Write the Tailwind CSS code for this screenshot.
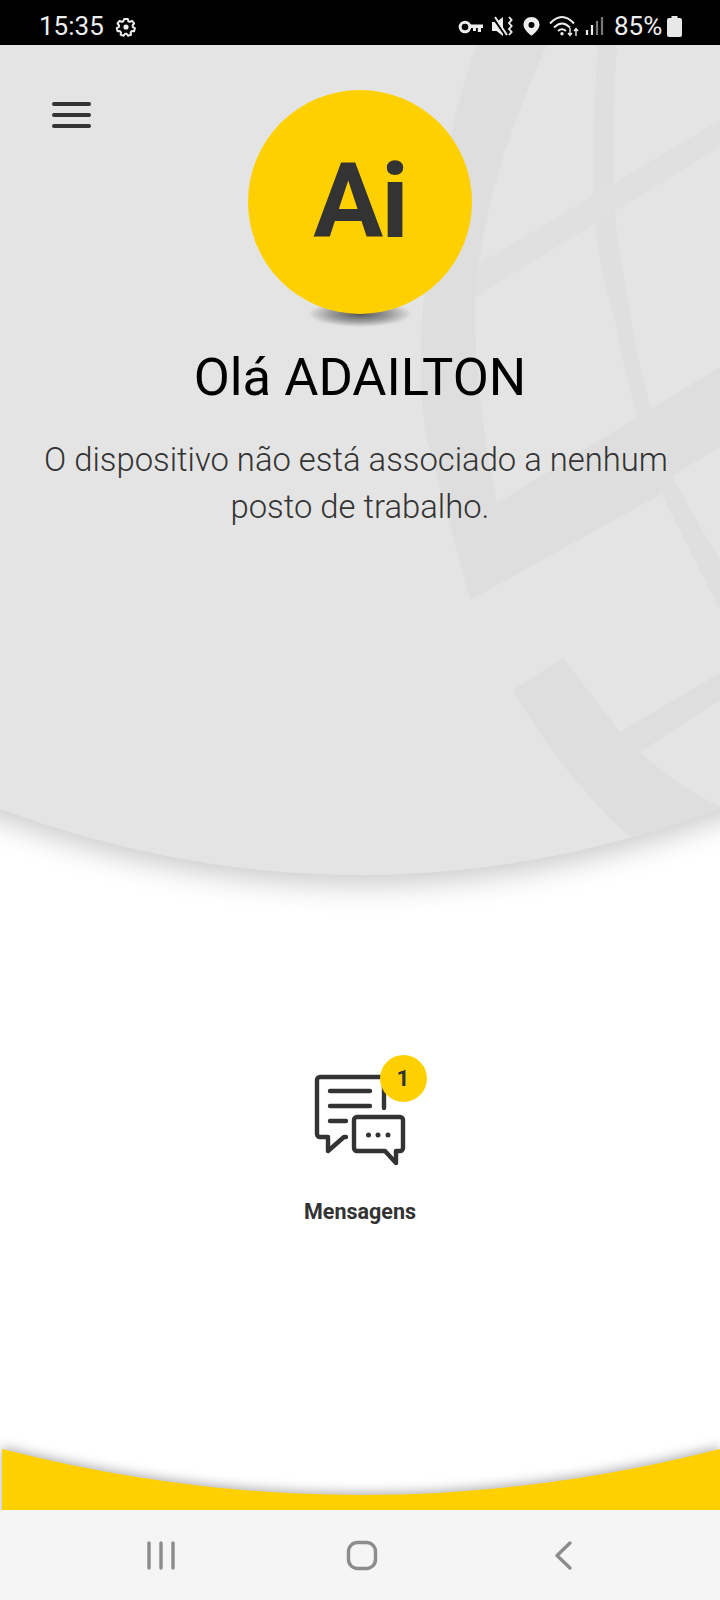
<!DOCTYPE html>
<html lang="pt">
<head>
  <meta charset="UTF-8">
  <meta name="viewport" content="width=device-width, initial-scale=1.0">
  <title>Início</title>
  <script src="https://cdn.jsdelivr.net/npm/@tailwindcss/browser@4"></script>
</head>
<body>
  <div class="w-[720px] h-[1600px] flex flex-col bg-white overflow-hidden font-['Roboto',sans-serif]">

    <!-- status bar -->
    <div class="relative z-20 h-[45px] shrink-0 bg-black flex items-center text-[#eeeeee] text-[26px] leading-none pl-[39px] pr-[38px]">
      <span class="w-[65px] pt-[6px]">15:35</span>
      <svg class="ml-[11px]" width="22" height="45" viewBox="116 0 22 45" fill="none" stroke="#eeeeee" stroke-width="2.200" stroke-linejoin="round">
        <path d="M125 18h4l.6 2.6 1.7.8 2.4-1.2 2.3 2.9-1.7 2 .3 1.9 2.3 1.2-.9 3.4-2.6-.1-1.3 1.5.5 2.6-3.4 1.1-1.5-2.2h-1.8l-1.5 2.2-3.4-1.1.5-2.6-1.3-1.5-2.6.1-.9-3.4 2.3-1.2.3-1.9-1.7-2 2.3-2.9 2.4 1.2 1.7-.8z" transform="translate(12.7 2.7) scale(.9)"/>
        <circle cx="127" cy="27" r="2.600" fill="#eeeeee" stroke="none"/>
      </svg>
      <svg class="ml-auto mr-[9px]" width="148" height="45" viewBox="458 0 148 45" fill="none" stroke="#eeeeee">
        <!-- key -->
        <circle cx="466" cy="27" r="4.800" stroke-width="3"/>
        <path d="M471 24.500h13v3.500h-2v4h-3.200v-4h-1.800v3h-3v-3h-3z" fill="#eeeeee" stroke="none"/>
        <!-- vibrate / mute -->
        <path d="M493 22h4.500l6.500-5v19l-6.500-5h-4.500z" fill="#eeeeee" stroke="none"/>
        <path d="M493 16l14 20" stroke="#000000" stroke-width="2.400"/>
        <path d="M496 17l12 18" stroke-width="2"/>
        <path d="M510 17l2.600 3-2.600 3 2.600 3-2.600 3 2.600 3-2.600 3" stroke-width="1.900"/>
        <!-- location -->
        <path fill-rule="evenodd" d="M532.500 17c-4.500 0-8 3.400-8 7.700 0 3.800 4.400 8.400 8 11 3.600-2.600 8-7.200 8-11 0-4.300-3.500-7.700-8-7.700zm0 5a3 3 0 1 1 0 6 3 3 0 0 1 0-6z" fill="#eeeeee" stroke="none"/>
        <!-- wifi -->
        <path d="M551 23.500Q563 10.500 575 23.500M555 27.500Q563 19.500 571 27.500M559 31Q563 27.500 567 31" stroke-width="1.900"/>
        <circle cx="563" cy="33.800" r="1.700" fill="#eeeeee" stroke="none"/>
        <path d="M571 28v7M569 33l2 2.500 2-2.500M577 36v-7M575 31l2-2.500 2 2.500" stroke-width="1.400"/>
        <!-- signal -->
        <path d="M588 35v-5M593 35v-10" stroke-width="2.200"/>
        <path d="M598 35v-14M603 35v-18" stroke="#777777" stroke-width="2.200"/>
      </svg>
      <span class="w-[49px] pt-[6px]">85%</span>
      <svg class="ml-[4px] mt-[7px]" width="15" height="21" viewBox="0 0 15 21">
        <path d="M4.500 0h6v2h2.500a2 2 0 0 1 2 2v15a2 2 0 0 1-2 2H2a2 2 0 0 1-2-2V4a2 2 0 0 1 2-2h2.500z" fill="#e8e8e8"/>
      </svg>
    </div>

    <!-- hero -->
    <div class="relative shrink-0 h-[785px] text-center">
      <svg class="absolute left-0 top-0" width="720" height="900" viewBox="0 45 720 900">
        <defs>
          <clipPath id="curve"><path d="M0 45H720V809Q360 941 0 809Z"/></clipPath>
        </defs>
        <path class="drop-shadow-[0_10px_14px_rgba(0,0,0,0.2)]" d="M-60 45H780V785Q360 965 -60 785Z" fill="#e4e4e4"/>
        <g clip-path="url(#curve)">
          <path fill="#dedede" d="M477 45Q445 130 425 290Q415 370 427 440L470 600L668 490L657 485L720 447V367L497 503Q475 400 475 307Q480 190 547 45Z"/>
          <path fill="#dfdfdf" d="M598 45Q592 130 593 190Q595 260 615 320Q625 380 657 485L720 610V560Q690 510 673 477Q660 440 650 405Q635 350 630 310Q615 240 613 180Q613 110 617 45Z"/>
          <path fill="#e0e0e0" d="M480 263L720 120V147L475 297Z"/>
          <path fill="#dedede" d="M513 690L563 658L620 732L720 673V700L640 752Q675 785 720 807V830L633 840Q565 780 513 690Z"/>
        </g>
      </svg>

      <div class="relative grid grid-cols-[1fr_224px_1fr] pt-[45px]">
        <div class="pl-[52px] pt-[12px]">
          <div class="w-[39px] flex flex-col gap-[7px]">
            <span class="h-[4px] rounded-full bg-[#333333]"></span>
            <span class="h-[4px] rounded-full bg-[#333333]"></span>
            <span class="h-[4px] rounded-full bg-[#333333]"></span>
          </div>
        </div>
        <div class="relative">
          <div class="absolute left-[60px] top-[211px] w-[104px] h-[26px] bg-[radial-gradient(closest-side,#555555,#999999_55%,transparent)]"></div>
          <div class="relative h-[224px] rounded-full bg-[#ffd000] flex items-center justify-center font-bold text-[104px] tracking-[-2px] leading-none text-[#333333]">Ai</div>
        </div>
      </div>
      <h1 class="relative mt-[33px] text-[52.500px] leading-[60px] text-black font-normal">Olá ADAILTON</h1>
      <p class="relative mt-[30px] text-[32.800px] leading-[47px] font-light text-[#333333]">O dispositivo não está associado a nenhum&nbsp;<br>posto de trabalho.</p>
    </div>

    <!-- tiles -->
    <div class="relative mt-[220px] flex flex-col items-center">
      <div class="relative w-[120px] h-[120px]">
        <svg width="120" height="120" viewBox="300 1050 120 120" fill="none" stroke="#333333" stroke-width="4.400" stroke-linecap="round" stroke-linejoin="round">
          <path d="M384 1108V1080a3 3 0 0 0-3-3H320a3 3 0 0 0-3 3V1134a3 3 0 0 0 3 3H328V1151L344 1137H346"/>
          <path d="M330 1091H370M330 1106H370M330 1121H346"/>
          <path d="M357 1117H400a3 3 0 0 1 3 3V1148a3 3 0 0 1-3 3H396V1163L385 1151H357a3 3 0 0 1-3-3V1120a3 3 0 0 1 3-3Z"/>
          <circle cx="368.500" cy="1135" r="2.500" fill="#333333" stroke="none"/>
          <circle cx="378" cy="1135" r="2.500" fill="#333333" stroke="none"/>
          <circle cx="388" cy="1135" r="2.500" fill="#333333" stroke="none"/>
        </svg>
        <span class="absolute left-[80px] top-[5px] w-[47px] h-[47px] rounded-full bg-[#ffd000] flex items-center justify-center text-[22.500px] font-bold text-[#333333] pr-[1px]">1</span>
      </div>
      <span class="mt-[29px] text-[21.500px] leading-[26px] font-bold text-[#333333]">Mensagens</span>
    </div>

    <!-- yellow wave -->
    <svg class="mt-auto block shrink-0" width="720" height="80" viewBox="0 1430 720 80">
      <path class="drop-shadow-[0_-2px_6px_rgba(0,0,0,0.32)]" d="M2 1449Q360 1541 720 1449V1520H2Z" fill="#ffd000"/>
    </svg>

    <!-- navigation bar -->
    <div class="h-[90px] shrink-0 bg-[#f5f5f5]">
      <svg width="720" height="90" viewBox="0 1510 720 90" fill="none" stroke="#8c8c8c" stroke-width="3.400" stroke-linecap="round" stroke-linejoin="round">
        <path d="M149 1543V1568M161 1543V1568M173 1543V1568"/>
        <rect x="348.500" y="1542.500" width="27" height="26" rx="9"/>
        <path d="M570 1543L557 1555.500L570 1568"/>
      </svg>
    </div>
  </div>
</body>
</html>
